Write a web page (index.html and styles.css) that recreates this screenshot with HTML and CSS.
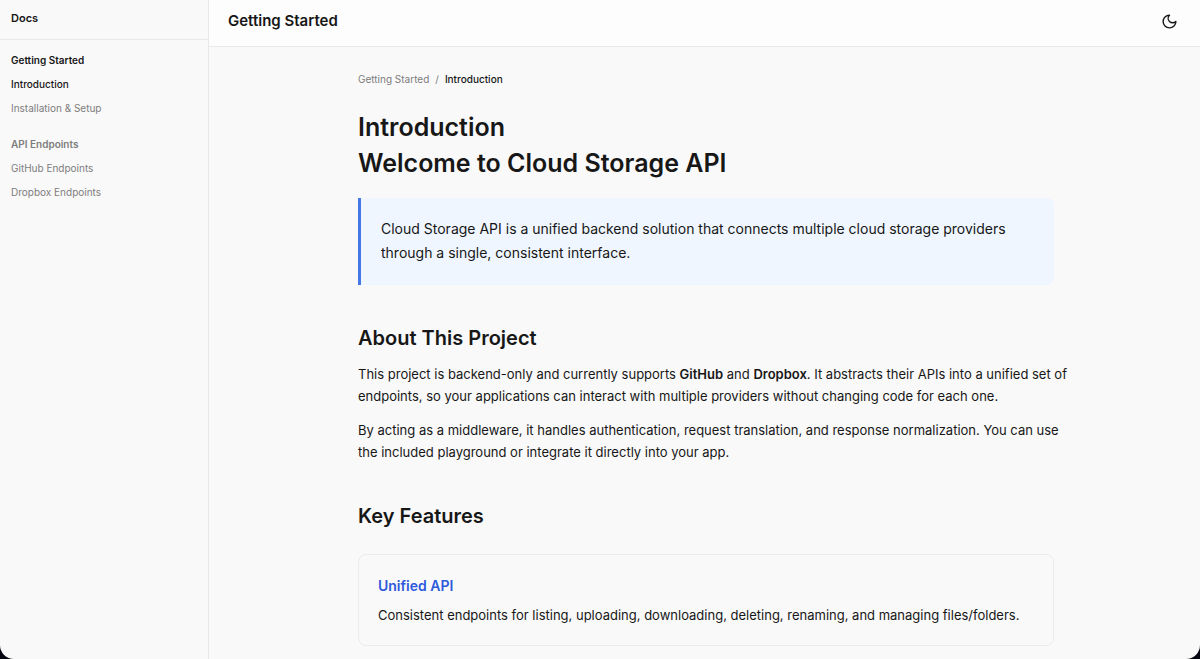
FILE: index.html
```html
<!DOCTYPE html>
<html lang="en">
<head>
<meta charset="utf-8">
<meta name="viewport" content="width=device-width, initial-scale=1">
<title>Introduction – Cloud Storage API</title>
<link rel="stylesheet" href="styles.css">
</head>
<body>
<div class="app">
  <aside class="sidebar">
    <div class="sidebar-title">Docs</div>
    <nav class="sidebar-nav" aria-label="Docs">
      <section class="nav-group">
        <h2 class="nav-heading nav-heading-active">Getting Started</h2>
        <a class="nav-link nav-link-active" href="#introduction" aria-current="page">Introduction</a>
        <a class="nav-link" href="#installation">Installation &amp; Setup</a>
      </section>
      <section class="nav-group">
        <h2 class="nav-heading">API Endpoints</h2>
        <a class="nav-link" href="#github">GitHub Endpoints</a>
        <a class="nav-link" href="#dropbox">Dropbox Endpoints</a>
      </section>
    </nav>
  </aside>
  <div class="page">
    <header class="topbar">
      <div class="topbar-title">Getting Started</div>
      <button class="theme-toggle" type="button" aria-label="Toggle theme">
        <svg class="icon" viewBox="0 0 24 24" fill="none" stroke="currentColor" stroke-width="2" stroke-linecap="round" stroke-linejoin="round" aria-hidden="true"><path d="M12 3a6 6 0 0 0 9 9 9 9 0 1 1-9-9Z"/></svg>
      </button>
    </header>
    <main class="content">
      <article class="article">
        <nav class="breadcrumb" aria-label="Breadcrumb">
          <a class="crumb" href="#getting-started">Getting Started</a>
          <span>/</span>
          <span class="crumb-current">Introduction</span>
        </nav>
        <h1 class="title">Introduction</h1>
        <h1 class="title">Welcome to Cloud Storage API</h1>
        <div class="callout">
          <p class="callout-text">Cloud Storage API is a unified backend solution that connects multiple cloud storage providers through a single, consistent interface.</p>
        </div>
        <section class="section">
          <h2 class="section-title">About This Project</h2>
          <div class="prose">
            <p class="text">This project is backend-only and currently supports <strong class="strong">GitHub</strong> and <strong class="strong">Dropbox</strong>. It abstracts their APIs into a unified set of endpoints, so your applications can interact with multiple providers without changing code for each one.</p>
            <p class="text">By acting as a middleware, it handles authentication, request translation, and response normalization. You can use the included playground or integrate it directly into your app.</p>
          </div>
        </section>
        <section class="section">
          <h2 class="section-title">Key Features</h2>
          <div class="card">
            <h3 class="card-title">Unified API</h3>
            <p class="text">Consistent endpoints for listing, uploading, downloading, deleting, renaming, and managing files/folders.</p>
          </div>
        </section>
      </article>
    </main>
  </div>
</div>
</body>
</html>
```
FILE: styles.css
```css
* { box-sizing: border-box; }

html { background: #05060f; }

body {
  margin: 0;
  font-family: Inter, "Liberation Sans", sans-serif;
  color: #171717;
}

h1, h2, h3, p { margin: 0; }
a { color: inherit; text-decoration: none; }

.app {
  display: flex;
  height: 100vh;
  overflow: hidden;
  background: #f9f9f9;
  border-radius: 0 0 14px 14px;
}

.sidebar {
  flex: 0 0 209px;
  border-right: 1px solid #e8e8e8;
}

.sidebar-title {
  padding: 10px 11px 13px;
  border-bottom: 1px solid #e8e8e8;
  font-size: 11px;
  line-height: 16px;
  font-weight: 600;
}

.sidebar-nav {
  display: flex;
  flex-direction: column;
  gap: 12px;
  padding: 8px 11px;
}

.nav-group {
  display: flex;
  flex-direction: column;
  font-size: 10px;
  line-height: 24px;
  color: #7d7d7d;
}

.nav-heading {
  font-size: 10px;
  font-weight: 600;
}

.nav-heading-active { color: #171717; }

.nav-link-active {
  color: #171717;
  font-weight: 500;
}

.page {
  flex: 1;
  min-width: 0;
  display: flex;
  flex-direction: column;
}

.topbar {
  display: flex;
  align-items: center;
  justify-content: space-between;
  padding: 7px 19px 11px;
  background: #fdfdfd;
  border-bottom: 1px solid #e8e8e8;
}

.topbar-title {
  font-size: 15px;
  line-height: 24px;
  font-weight: 600;
}

.theme-toggle {
  display: flex;
  align-items: center;
  justify-content: center;
  width: 24px;
  height: 28px;
  padding: 0;
  border: 0;
  background: none;
  color: #171717;
}

.icon {
  width: 17px;
  height: 17px;
}

.content {
  flex: 1;
  min-height: 0;
  overflow: auto;
  scrollbar-width: none;
  padding: 24px 20px 24px 23px;
}

.article {
  max-width: 696px;
  margin: 0 auto;
}

.breadcrumb {
  display: flex;
  gap: 6px;
  margin-bottom: 21px;
  font-size: 10px;
  line-height: 17px;
  color: #7d7d7d;
}

.crumb-current {
  color: #171717;
  font-weight: 500;
}

.title {
  font-size: 25px;
  line-height: 36px;
  font-weight: 600;
}

.callout {
  margin-top: 17px;
  padding: 19px 20px 20px;
  background: #eff6ff;
  border-left: 3px solid #4478e6;
  border-radius: 0 7px 7px 0;
}

.callout-text {
  font-size: 14px;
  line-height: 24px;
}

.section { margin-top: 38px; }

.section-title {
  margin-bottom: 10px;
  font-size: 20px;
  line-height: 30px;
  font-weight: 600;
}

/* Running text may extend a little past the column edge. */
.prose { margin-right: -16px; }

.text {
  font-size: 13px;
  line-height: 22px;
}

.text + .text { margin-top: 12px; }

.strong { font-weight: 600; }

.card {
  margin-top: 23px;
  padding: 19px;
  border: 1px solid #ebebeb;
  border-radius: 8px;
}

.card-title {
  margin-bottom: 6px;
  font-size: 14px;
  line-height: 24px;
  font-weight: 600;
  color: #2f59dc;
}
```
